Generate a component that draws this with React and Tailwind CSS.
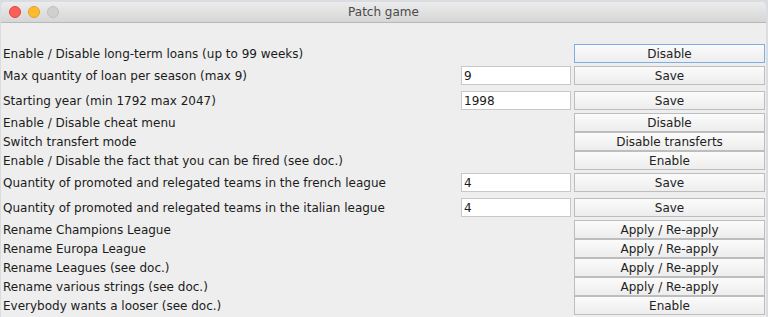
import React, { useState } from 'react';

const rows = [
  { label: 'Enable / Disable long-term loans (up to 99 weeks)', button: 'Disable', focused: true },
  { label: 'Max quantity of loan per season (max 9)', field: '9', button: 'Save' },
  { label: 'Starting year (min 1792 max 2047)', field: '1998', button: 'Save' },
  { label: 'Enable / Disable cheat menu', button: 'Disable' },
  { label: 'Switch transfert mode', button: 'Disable transferts' },
  { label: 'Enable / Disable the fact that you can be fired (see doc.)', button: 'Enable' },
  { label: 'Quantity of promoted and relegated teams in the french league', field: '4', button: 'Save' },
  { label: 'Quantity of promoted and relegated teams in the italian league', field: '4', button: 'Save' },
  { label: 'Rename Champions League', button: 'Apply / Re-apply' },
  { label: 'Rename Europa League', button: 'Apply / Re-apply' },
  { label: 'Rename Leagues (see doc.)', button: 'Apply / Re-apply' },
  { label: 'Rename various strings (see doc.)', button: 'Apply / Re-apply' },
  { label: 'Everybody wants a looser (see doc.)', button: 'Enable' },
];

const PatchRow = ({ row }) => {
  const [value, setValue] = useState(row.field ?? '');
  const hasField = row.field !== undefined;

  return (
    <div className={`flex items-center ${hasField ? 'h-[25px] py-[3px]' : 'h-[19px]'}`}>
      <span className="flex-1 pl-[2px] text-[#1b1b1b] whitespace-nowrap">{row.label}</span>
      {hasField && (
        <input
          type="text"
          value={value}
          onChange={(e) => setValue(e.target.value)}
          className="w-[110px] h-[19px] mr-[3px] px-[2px] bg-white border border-[#c8c8c8] text-[#1b1b1b] outline-none"
        />
      )}
      <button
        className={`w-[191px] h-[19px] border bg-gradient-to-b from-[#fbfbfb] to-[#ededed] text-[#222] leading-none ${
          row.focused ? 'border-[#7eaee6]' : 'border-[#bdbdbd]'
        }`}
      >
        {row.button}
      </button>
    </div>
  );
};

const App = () => {
  return (
    <div className="w-[768px] h-[317px] bg-[#d9dde2] overflow-hidden pt-[2px] pl-[1px]">
      <div
        className="w-[765px] h-[315px] bg-[#eeeeee] rounded-t-[5px] overflow-hidden text-[12px]"
        style={{ fontFamily: '"DejaVu Sans", sans-serif' }}
      >
        <div className="relative h-[21px] flex items-center justify-center bg-gradient-to-b from-[#ececec] to-[#d6d6d6] border-b border-[#b8b8b8]">
          <div className="absolute left-[8px] top-[4px] flex gap-[7px]">
            <span className="w-[12px] h-[12px] rounded-full bg-[#fc5f57] border border-[#e0443e]" />
            <span className="w-[12px] h-[12px] rounded-full bg-[#fdbc2e] border border-[#dea123]" />
            <span className="w-[12px] h-[12px] rounded-full bg-[#d0d0d0] border border-[#bfbfbf]" />
          </div>
          <span className="text-[#4a4a4a]">Patch game</span>
        </div>
        <div className="pt-[21px] pr-[1px]">
          {rows.map((row, i) => (
            <PatchRow key={i} row={row} />
          ))}
        </div>
      </div>
    </div>
  );
};

export default App;
